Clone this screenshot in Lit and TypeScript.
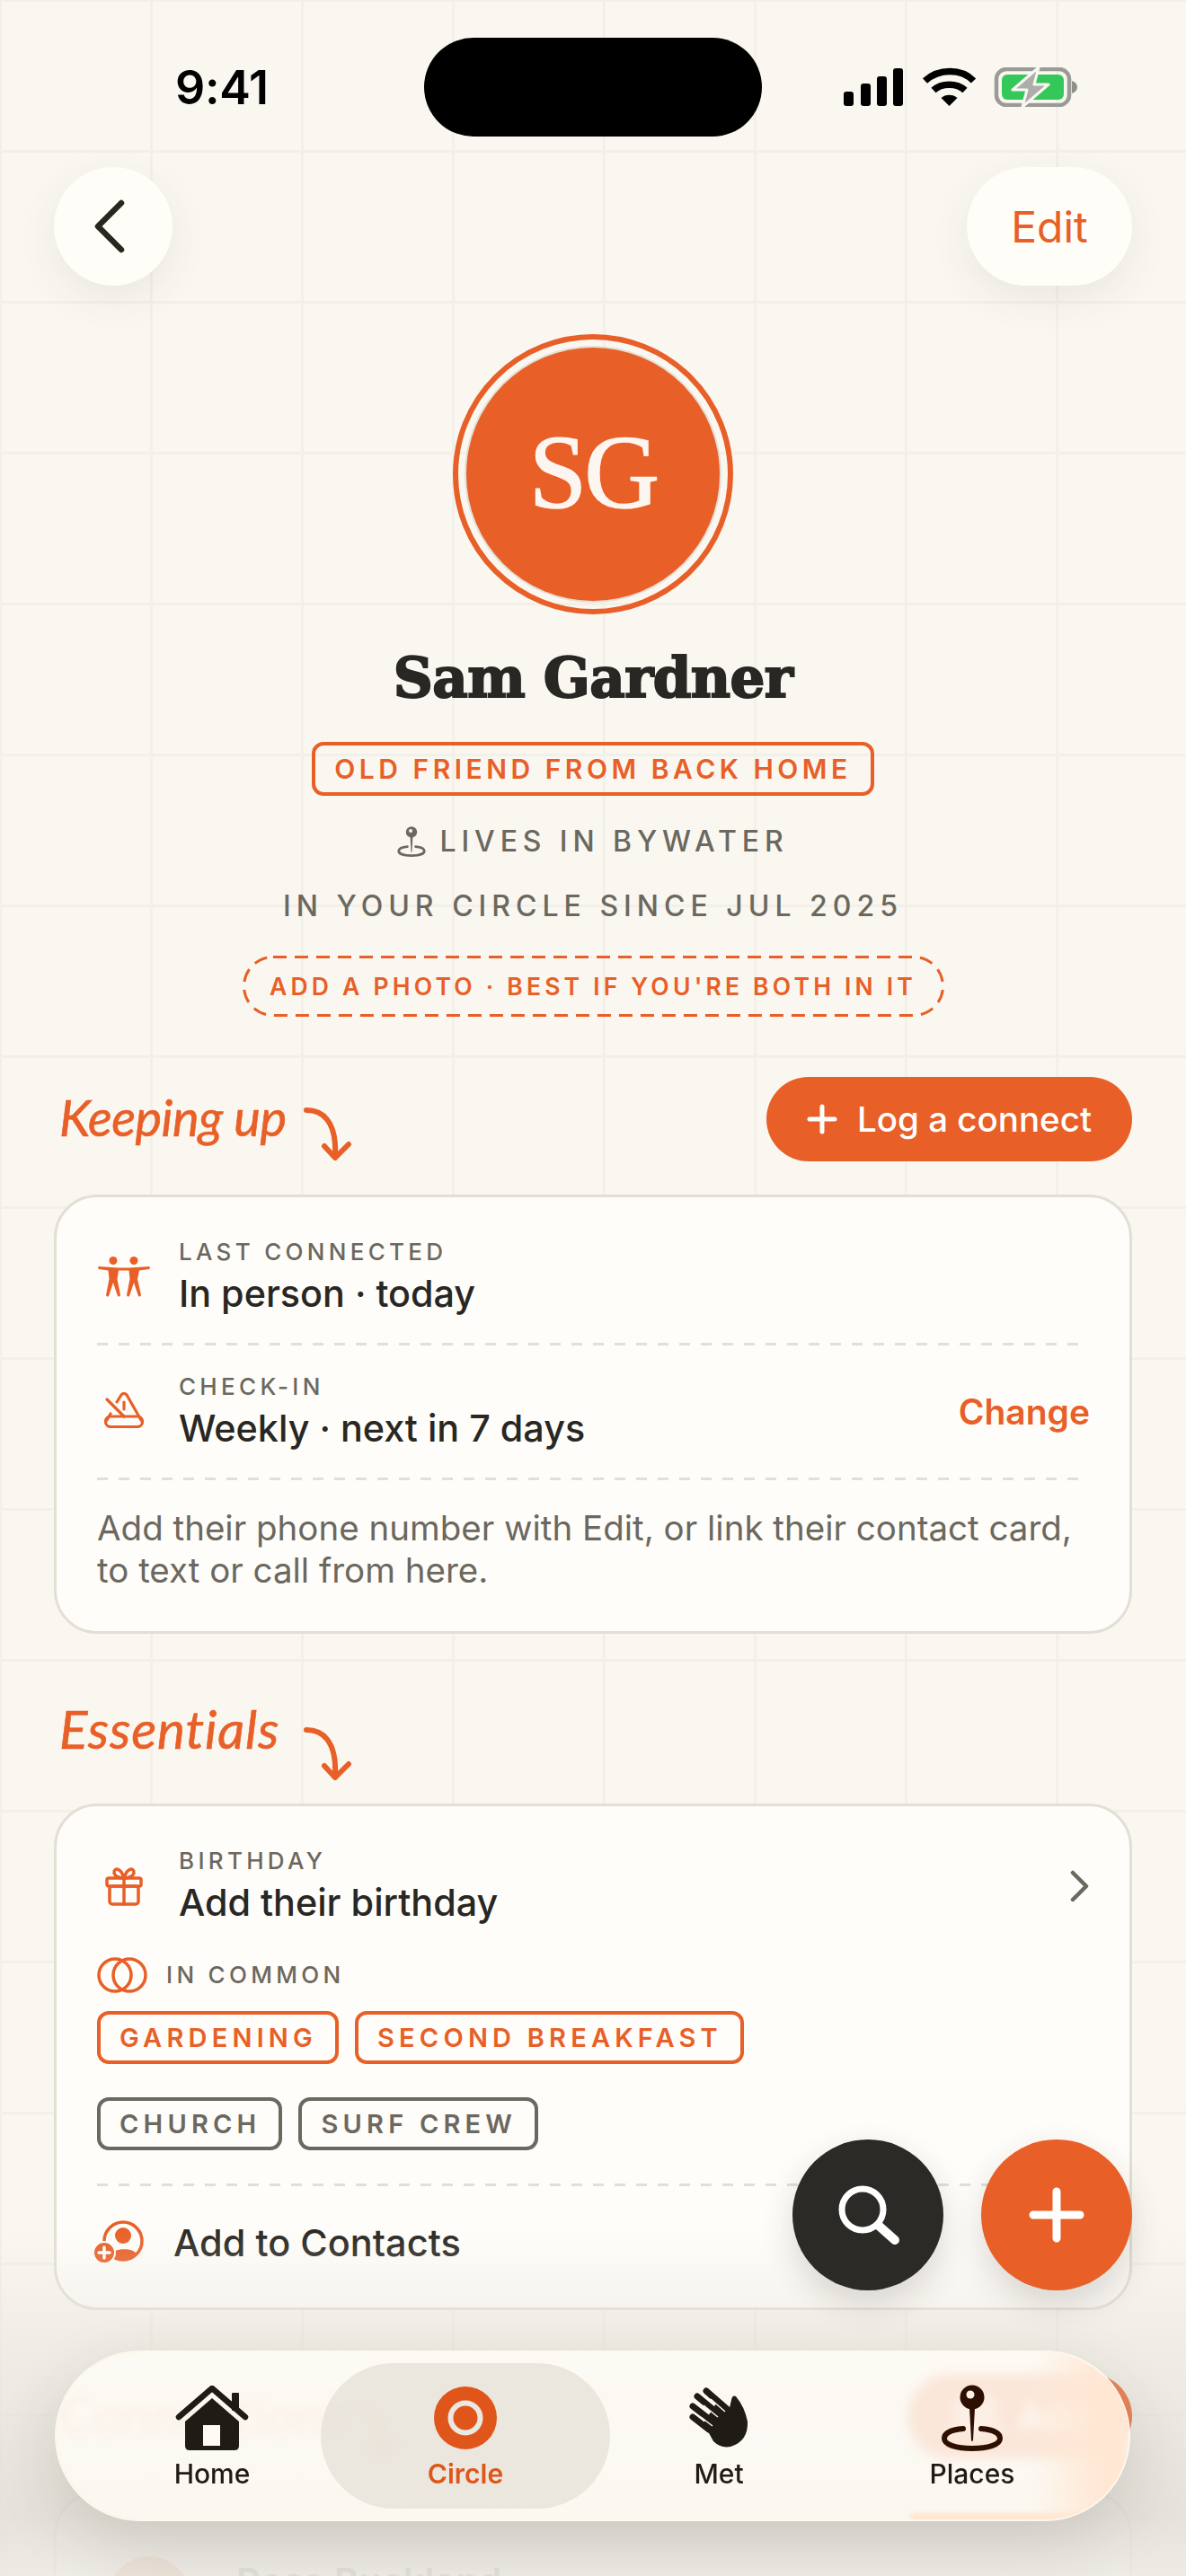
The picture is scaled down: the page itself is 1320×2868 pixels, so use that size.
import { LitElement, html, css } from "lit";
import { customElement } from "lit/decorators.js";

const arrow = (cls: string) => html`<svg class="arrow ${cls}" viewBox="0 0 54 60" fill="none" stroke="#e85f27" stroke-width="6" stroke-linecap="round" stroke-linejoin="round"><path d="M3 3C20 3 37 14 35 54"/><path d="M23 43L35 56L50 41"/></svg>`;

const pin = (color: string, w: number, h: number) => html`<svg width=${w} height=${h} viewBox="0 0 68 74" fill="none"><circle cx="34" cy="14" r="13.5" fill=${color}/><circle cx="32" cy="11" r="4.5" fill="#fff3e6"/><path d="M31 26H37L35 62Q34 64 33 62Z" fill=${color}/><path d="M24 49C11 50 3 54 3 60C3 67 17 71 34 71C51 71 65 67 65 60C65 54 57 50 44 49" stroke=${color} stroke-width="6" stroke-linecap="round"/></svg>`;

@customElement("app-root")
export class AppRoot extends LitElement {
  static styles = css`
    :host {
      display: block;
      position: relative;
      width: 1320px;
      height: 2868px;
      overflow: hidden;
      background-color: #faf7f1;
      background-image: linear-gradient(to right, #f3f0e9 3px, transparent 3px),
        linear-gradient(to bottom, #f3f0e9 3px, transparent 3px);
      background-size: 168px 168px;
      background-position: 167px 167px;
      font-family: Inter, "Noto Sans", sans-serif;
      color: #282724;
    }
    .page { padding: 0 60px; }
    .status {
      display: flex;
      justify-content: space-between;
      align-items: flex-start;
      height: 186px;
      margin: 0 -60px;
      padding: 76px 121px 0 195px;
      box-sizing: border-box;
    }
    .status svg { margin-top: -1px; }
    .time { font-size: 52px; line-height: 44px; font-weight: 600; color: #000; letter-spacing: -0.3px; }
    .island {
      position: absolute; left: 472px; top: 42px; width: 376px; height: 110px;
      background: #000; border-radius: 55px;
    }
    .top { display: flex; justify-content: space-between; height: 132px; }
    .round {
      height: 132px; background: #fffdf8; border-radius: 66px;
      display: flex; align-items: center; justify-content: center;
      box-shadow: 0 14px 44px rgba(60, 50, 35, 0.08);
    }
    .back { width: 132px; }
    .back svg { margin-right: 10px; }
    .edit { width: 184px; color: #e85f27; font-size: 48px; }
    .hero { display: flex; flex-direction: column; align-items: center; }
    .avatar {
      margin-top: 54px; width: 312px; height: 312px; box-sizing: border-box;
      border-radius: 50%; border: 6.5px solid #e85f27;
      display: flex; align-items: center; justify-content: center;
    }
    .disc {
      width: 282px; height: 282px; box-sizing: border-box; border-radius: 50%;
      background: #e85f27; box-shadow: 0 0 0 2px #e4dfd4;
      display: flex; align-items: center; justify-content: center; padding-bottom: 4px;
      font-family: "Liberation Serif", serif; font-size: 116px; color: #fdf5ef; letter-spacing: -3px;
      -webkit-text-stroke: 1.5px #fdf5ef;
    }
    .name {
      margin-top: 31px; font-family: "DejaVu Serif", serif; font-weight: 700;
      font-size: 61px; line-height: 80px; color: #282724; letter-spacing: -0.6px;
      -webkit-text-stroke: 2px #282724;
    }
    .tag {
      margin-top: 31px; height: 60px; box-sizing: border-box; padding: 0 21px;
      border: 4.5px solid #e85f27; border-radius: 13px;
      display: flex; align-items: center;
      color: #e85f27; font-weight: 600; font-size: 30px; letter-spacing: 4.5px;
    }
    .meta {
      display: flex; align-items: center; gap: 15px; color: #6b685f;
      font-weight: 500; font-size: 32px; line-height: 40px; letter-spacing: 5.9px;
    }
    .m1 { margin-top: 31px; }
    .m2 { margin-top: 32px; margin-bottom: -2px; letter-spacing: 6px; }
    .photo {
      position: relative; margin-top: 37px; height: 68px; box-sizing: border-box; width: 781px;
      display: flex; align-items: center; justify-content: center;
      color: #e85f27; font-weight: 600; font-size: 26.5px; letter-spacing: 4.2px;
    }
    .photo svg { position: absolute; left: 0; top: 0; }
    .head { display: flex; align-items: center; height: 94px; margin-top: 67px; }
    .head.b { margin-top: 58px; }
    .head.c { margin-top: 71px; position: relative; z-index: 2; }
    .title {
      width: 278px; padding-left: 6px; box-sizing: border-box; flex: none;
      font-family: Lato, sans-serif; font-style: italic; font-weight: 400;
      font-size: 56px; color: #e85f27; white-space: nowrap; letter-spacing: -0.5px;
      -webkit-text-stroke: 0.6px #e85f27; margin-top: -6px;
    }
    .title.e { font-size: 58.5px; letter-spacing: 0.8px; margin-top: 0; }
    .title.wide { width: 330px; font-size: 60px; letter-spacing: 1px; opacity: 0.4; }
    .arrow { width: 54px; height: 60px; flex: none; margin-top: 34px; }
    .arrow.two { margin-top: 58px; }
    .arrow.three { opacity: 0.5; }
    .log {
      margin-left: auto; height: 94px; width: 407px; border-radius: 47px; background: #e85f27;
      color: #fff; font-size: 38.5px; font-weight: 500;
      display: flex; align-items: center; justify-content: center; gap: 22px;
    }
    .add {
      margin-left: auto; height: 94px; width: 250px; border-radius: 47px; background: #e85f27; opacity: 0.72;
      color: #fff; font-size: 40px; font-weight: 500;
      display: flex; align-items: center; justify-content: center; gap: 20px;
    }
    .card {
      margin-top: 37px; background: #fffdf9; border: 3px solid #e4dfd4; border-radius: 48px;
      padding: 15px 47px 0 45px;
    }
    .row { display: flex; align-items: center; padding: 29px 0; gap: 31px; }
    .row.flush { padding-bottom: 0; }
    .ico { width: 60px; display: flex; justify-content: center; flex: none; }
    .ico.up { margin-top: -4px; }
    .grow { flex: 1; min-width: 0; }
    .label {
      font-size: 26px; line-height: 34px; font-weight: 500; color: #6b685f; letter-spacing: 4.3px;
    }
    .value { font-size: 41.3px; line-height: 52px; font-weight: 500; margin-top: 3px; color: #282724; }
    .change { font-size: 39px; font-weight: 600; color: #e85f27; margin-right: -3px; }
    .chev { margin-right: -2px; }
    .rule {
      height: 3px; margin-right: 10px;
      background: repeating-linear-gradient(to right, #e4dfd4 0 12px, transparent 12px 24px);
    }
    .note {
      padding: 30px 0 44px; font-size: 38.5px; line-height: 47px; color: #6b685f;
      white-space: nowrap;
    }
    .common { display: flex; align-items: center; gap: 21px; margin-top: 35px; }
    .common .label { letter-spacing: 4.3px; }
    .chips { display: flex; gap: 18px; margin-top: 20px; }
    .chips + .chips { margin-top: 37px; }
    .chip {
      height: 59px; box-sizing: border-box; padding: 0 20px 0 21px;
      border: 4.5px solid #e85f27; border-radius: 13px;
      display: flex; align-items: center;
      color: #e85f27; font-size: 29px; font-weight: 600; letter-spacing: 5.2px;
    }
    .chip.gray { border-color: #6b685f; color: #6b685f; }
    .rule.low { margin-top: 37px; }
    .contacts { display: flex; align-items: center; gap: 33px; padding: 37px 0 46px; font-size: 41.5px; line-height: 52px; font-weight: 500; margin-left: -4px; }
    .peek { display: flex; align-items: flex-start; gap: 51px; padding: 54px 0 0 12px; opacity: 0.4; font-size: 41.5px; font-weight: 600; line-height: 52px; }
    .peek i { width: 92px; height: 92px; border-radius: 50%; background: #e85f27; flex: none; }
    .peek span { margin-top: 2px; }
    .fade {
      position: absolute; z-index: 1; left: 0; right: 0; top: 2480px; bottom: 0;
      background: linear-gradient(to bottom, rgba(232, 229, 222, 0) 0, rgba(232, 229, 222, 0.55) 130px, rgba(226, 223, 216, 0.85) 320px, rgba(236, 233, 227, 0.85) 388px);
    }
    .fab {
      position: absolute; z-index: 3; top: 2382px; width: 168px; height: 168px; border-radius: 50%;
      display: flex; align-items: center; justify-content: center;
      box-shadow: 0 14px 36px rgba(50, 40, 30, 0.16);
    }
    .fab.s { left: 882px; background: #2b2a26; }
    .fab.p { left: 1092px; background: #e85f27; }
    .tabbar {
      position: absolute; z-index: 3; left: 63px; top: 2619px; width: 1193px; height: 186px; box-sizing: border-box;
      padding: 0 32px; display: flex; background: rgba(255, 252, 246, 0.82);
      -webkit-backdrop-filter: blur(6px); backdrop-filter: blur(6px);
      border-radius: 93px; overflow: hidden;
      box-shadow: 0 0 0 2px #fff8ec, 0 24px 72px rgba(50, 42, 30, 0.16);
    }
    .edge {
      position: absolute; right: 0; top: 0; bottom: 0; width: 110px;
      background: linear-gradient(to right, rgba(255, 231, 212, 0), #ffe7d4 70%);
      filter: blur(5px);
    }
    .foot {
      position: absolute; left: 950px; right: 0; bottom: -3px; height: 10px;
      background: #ffe4cd; filter: blur(3px);
    }
    .tab {
      position: relative; width: 282px; flex: none; display: flex; flex-direction: column; align-items: center;
      padding-top: 36px; box-sizing: border-box;
      font-size: 30px; font-weight: 500; color: #1f1c15;
    }
    .tab .ic { height: 74px; display: flex; align-items: center; justify-content: center; position: relative; }
    .tab span { margin-top: 5px; line-height: 40px; position: relative; }
    .tab.on { color: #e0561a; font-weight: 600; }
    .tab.on::before {
      content: ""; position: absolute; left: -20px; right: -20px; top: 12px; bottom: 12px;
      background: rgba(224, 220, 210, 0.62); border-radius: 81px;
    }
  `;

  render() {
    return html`
      <div class="page">
        <div class="status">
          <div class="time">9:41</div>
          <svg width="260" height="44" viewBox="0 0 260 44">
            <rect x="0" y="27" width="11" height="16" rx="3"/><rect x="19" y="18" width="11" height="25" rx="3"/>
            <rect x="37" y="10" width="11" height="33" rx="3"/><rect x="55" y="1" width="11" height="42" rx="3"/>
            <g fill="none" stroke="#000" stroke-width="7.5">
              <path d="M90.5 15C106 1 131 1 144.5 15"/><path d="M100 25.5C109 17 126 17 135 25.5"/>
            </g>
            <path d="M108.500 34C113 29.500 122 29.500 126.500 34L117.500 43Z"/>
            <rect x="170" y="2" width="81" height="40" rx="11" fill="none" stroke="#9b9b96" stroke-width="4.500"/>
            <rect x="176" y="8" width="69" height="28" rx="6" fill="#34c759"/>
            <path d="M254 15Q260 17 260 22Q260 27 254 29Z" fill="#8f8f8a"/>
            <path d="M217 0L188 25H204L199 44L228 19H212Z" fill="#adadaa" stroke="#faf7f1" stroke-width="3" stroke-linejoin="round"/>
          </svg>
        </div>
        <div class="top">
          <div class="round back"><svg width="36" height="60" viewBox="0 0 36 60" fill="none" stroke="#28261f" stroke-width="6.500" stroke-linecap="round" stroke-linejoin="round"><path d="M32 4L6 30L32 56"/></svg></div>
          <div class="round edit">Edit</div>
        </div>
        <div class="hero">
          <div class="avatar"><div class="disc">SG</div></div>
          <div class="name">Sam Gardner</div>
          <div class="tag">OLD FRIEND FROM BACK HOME</div>
          <div class="meta m1">${pin("#6b685f", 32, 34)}<span>LIVES IN BYWATER</span></div>
          <div class="meta m2">IN YOUR CIRCLE SINCE JUL 2025</div>
          <div class="photo">
            <svg width="781" height="68" viewBox="0 0 781 68" fill="none"><rect x="1.500" y="1.500" width="778" height="65" rx="32.500" stroke="#e85f27" stroke-width="3" stroke-dasharray="15 9"/></svg>
            ADD A PHOTO · BEST IF YOU'RE BOTH IN IT
          </div>
        </div>

        <div class="head">
          <div class="title">Keeping up</div>${arrow("one")}
          <div class="log"><svg width="34" height="34" viewBox="0 0 34 34" stroke="#fff" stroke-width="5" stroke-linecap="round"><path d="M17 3V31M3 17H31"/></svg>Log a connect</div>
        </div>
        <div class="card">
          <div class="row">
            <div class="ico"><svg width="60" height="46" viewBox="0 0 60 46" fill="#e85f27">
              <circle cx="18" cy="4.500" r="4.500"/><circle cx="41" cy="4.500" r="4.500"/>
              <path d="M2 11L24 12.500H36L58 11Q60 12.500 58 14L47 15.500L45 25L49 43Q48 45.500 46 44L41 29L36 44Q34 45.500 33 43L36.500 25L35.500 15.500H24L22.500 25L26 43Q25 45.500 23 44L18 29L13 44Q11 45.500 10 43L13.500 25L12.500 15.500L2 14Q0 12.500 2 11Z"/>
            </svg></div>
            <div class="grow"><div class="label">LAST CONNECTED</div><div class="value">In person · today</div></div>
          </div>
          <div class="rule"></div>
          <div class="row">
            <div class="ico up"><svg width="44" height="40" viewBox="0 0 44 40" fill="none" stroke="#e85f27" stroke-width="3.200" stroke-linecap="round" stroke-linejoin="round">
              <path d="M14 11L19 3Q22 0 25 3L41 31"/><path d="M3 31L7 24"/>
              <rect x="1.500" y="27" width="41" height="11.500" rx="5.500"/>
              <path d="M3 8L22 27"/><path d="M22 11V19"/>
            </svg></div>
            <div class="grow"><div class="label">CHECK-IN</div><div class="value">Weekly · next in 7 days</div></div>
            <div class="change">Change</div>
          </div>
          <div class="rule"></div>
          <div class="note">Add their phone number with Edit, or link their contact card,<br />to text or call from here.</div>
        </div>

        <div class="head b"><div class="title e">Essentials</div>${arrow("two")}</div>
        <div class="card">
          <div class="row flush">
            <div class="ico"><svg width="42" height="44" viewBox="0 0 42 44" fill="none" stroke="#e85f27" stroke-width="3.500" stroke-linejoin="round" stroke-linecap="round">
              <rect x="2" y="13" width="38" height="9" rx="2"/><rect x="5" y="22" width="32" height="20" rx="3"/><path d="M21 13V42"/>
              <path d="M21 13C14 13 10 10 10 6.500C10 2 17 0 21 13C25 0 32 2 32 6.500C32 10 28 13 21 13Z"/>
            </svg></div>
            <div class="grow"><div class="label">BIRTHDAY</div><div class="value">Add their birthday</div></div>
            <svg class="chev" width="22" height="36" viewBox="0 0 22 36" fill="none" stroke="#6b685f" stroke-width="4.500" stroke-linecap="round" stroke-linejoin="round"><path d="M4 3L19 18L4 33"/></svg>
          </div>
          <div class="common">
            <svg width="56" height="40" viewBox="0 0 56 40" fill="none" stroke="#e85f27" stroke-width="3.500"><circle cx="20" cy="20" r="18"/><circle cx="36" cy="20" r="18"/></svg>
            <div class="label">IN COMMON</div>
          </div>
          <div class="chips"><div class="chip">GARDENING</div><div class="chip">SECOND BREAKFAST</div></div>
          <div class="chips"><div class="chip gray">CHURCH</div><div class="chip gray">SURF CREW</div></div>
          <div class="rule low"></div>
          <div class="contacts">
            <svg width="56" height="50" viewBox="0 0 56 50">
              <circle cx="33" cy="23" r="21" fill="none" stroke="#e85f27" stroke-width="3.500"/>
              <circle cx="33" cy="17" r="9" fill="#e85f27"/><path d="M18 40C20 30 46 30 48 38Q33 50 18 40Z" fill="#e85f27"/>
              <circle cx="12" cy="36" r="12" fill="#e85f27" stroke="#fffdf9" stroke-width="2"/>
              <path d="M12 30V42M6 36H18" stroke="#fff" stroke-width="3.500" stroke-linecap="round"/>
            </svg>
            <span>Add to Contacts</span>
          </div>
        </div>

        <div class="head c">
          <div class="title wide">Connections</div>${arrow("one three")}
          <div class="add">
            <svg width="56" height="44" viewBox="0 0 56 44" fill="none" stroke="#fff" stroke-width="4"><circle cx="17" cy="12" r="8"/><circle cx="39" cy="12" r="8"/><path d="M3 42C3 22 31 22 31 42M25 42C25 22 53 22 53 42"/></svg>
            Add
          </div>
        </div>
        <div class="card"><div class="peek"><i></i><span>Rosa Buckland</span></div></div>
      </div>

      <div class="island"></div>
      <div class="fade"></div>
      <div class="fab s"><svg width="84" height="84" viewBox="0 0 84 84" fill="none" stroke="#fff" stroke-linecap="round"><circle cx="36" cy="36" r="23" stroke-width="7"/><path d="M54 54L72 70" stroke-width="10"/></svg></div>
      <div class="fab p"><svg width="62" height="62" viewBox="0 0 62 62" stroke="#fff" stroke-width="9" stroke-linecap="round"><path d="M31 5V57M5 31H57"/></svg></div>
      <div class="tabbar">
        <div class="edge"></div><div class="foot"></div>
        <div class="tab">
          <div class="ic"><svg width="82" height="72" viewBox="0 0 82 72" fill="#1f1c15">
            <rect x="63" y="8" width="8" height="20" rx="1"/>
            <path d="M41 14L71 40V67Q71 72 66 72H16Q11 72 11 67V40Z"/>
            <path d="M4 35L41 3L78 35" fill="none" stroke="#1f1c15" stroke-width="6.500" stroke-linecap="round" stroke-linejoin="round"/>
            <rect x="31" y="44" width="19" height="23" fill="#fffbf4"/>
          </svg></div><span>Home</span>
        </div>
        <div class="tab on">
          <div class="ic"><svg width="70" height="70" viewBox="0 0 70 70"><circle cx="35" cy="35" r="35" fill="#e0561a"/><circle cx="35" cy="35" r="16.500" fill="none" stroke="#ebe8e1" stroke-width="6"/></svg></div><span>Circle</span>
        </div>
        <div class="tab">
          <div class="ic"><svg width="66" height="68" viewBox="0 0 66 68" fill="#1f1c15">
            <g stroke="#1f1c15" stroke-width="7" stroke-linecap="round"><path d="M19 4L42 24"/><path d="M9 10L32 29"/><path d="M4 21L26 38"/><path d="M4 33L22 47"/></g>
            <path d="M16 40L30 18L44 27L47 14Q48 8 52 10Q62 22 65 38Q66 60 46 66Q35 68 27 60Z"/>
            <g stroke="#fffbf4" stroke-width="1.500"><path d="M24 13L40 27"/><path d="M16 20L32 33"/><path d="M13 33L26 43"/></g>
          </svg></div><span>Met</span>
        </div>
        <div class="tab">
          <div class="ic">${pin("#2e1000", 68, 74)}</div><span>Places</span>
        </div>
      </div>
    `;
  }
}
